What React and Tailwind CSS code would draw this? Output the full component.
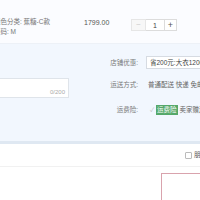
export default function App() {
  const font = { fontFamily: '"Liberation Sans", "Noto Sans CJK SC", sans-serif' };
  return (
    <div className="w-[200px] h-[200px] overflow-hidden bg-white text-[#555]" style={font}>
      {/* item row */}
      <div className="h-[44px] bg-[#fbfcff] flex border-b border-[#edf1f7]">
        <div className="w-[90px] -ml-[6px] pt-[18px] flex flex-col gap-[2px] text-[6.5px] leading-[8px] text-[#777] whitespace-nowrap">
          <div>颜色分类: 蕉糖-C款</div>
          <div>尺码: M</div>
        </div>
        <div className="w-[47px] pt-[19px] text-[7px] leading-[8px] text-[#555]">1799.00</div>
        <div className="pt-[19px] flex h-fit">
          <div className="w-[15px] h-[12px] border border-[#e6e6e6] bg-[#f7f7f7] flex items-center justify-center text-[8px] leading-none text-[#ccc]">−</div>
          <div className="w-[18px] h-[12px] border-y border-[#dcdcdc] bg-white flex items-center justify-center text-[7px] leading-none text-[#444]">1</div>
          <div className="w-[13px] h-[12px] border border-[#dcdcdc] bg-white flex items-center justify-center text-[9px] leading-none text-[#555]">+</div>
        </div>
      </div>

      {/* message + shop options */}
      <div className="h-[97px] bg-[#f2f7fe] flex">
        <div className="w-[69px] pt-[34px] shrink-0">
          <div className="h-[20px] -ml-[2px] border border-[#dfe4ea] bg-white flex items-end justify-end pr-[3px] pb-[1px] text-[6px] leading-[8px] text-[#aaa]">0/200</div>
        </div>
        <div className="ml-[31px] pt-[12px] flex flex-col text-[6.5px] leading-[8px] whitespace-nowrap">
          <div className="flex items-center h-[13px]">
            <div className="w-[38px] text-right text-[#777]">店铺优惠:</div>
            <div className="ml-[8px] h-[13px] w-[70px] border border-[#d6dbe2] bg-white flex items-center pl-[3px] text-[#444]">省200元:大衣1200减200</div>
          </div>
          <div className="flex items-center h-[10px] mt-[11px]">
            <div className="w-[38px] text-right text-[#777]">运送方式:</div>
            <div className="ml-[10px] text-[#666]">普通配送 快递 免邮</div>
          </div>
          <div className="flex items-center h-[10px] mt-[15px]">
            <div className="w-[38px] text-right text-[#777]">运费险:</div>
            <div className="ml-[12px] text-[#bbb] text-[6px]">✓</div>
            <div className="ml-[2px] h-[10px] px-[1px] bg-[#55a86a] text-white flex items-center">运费险</div>
            <div className="ml-[2px] text-[#666]">卖家赠送</div>
          </div>
        </div>
      </div>
      <div className="h-[3px] bg-[#dfe8f2]"></div>

      {/* bottom */}
      <div className="h-[23px] flex items-center pl-[185px] border-b border-[#f1f1f1]">
        <div className="flex items-center gap-[2px] text-[6.5px] text-[#555] whitespace-nowrap">
          <div className="w-[7px] h-[7px] shrink-0 border border-[#bbb] bg-white rounded-[1px]"></div>
          <span>朋友代付</span>
        </div>
      </div>
      <div className="pt-[6px] pl-[161px]">
        <div className="w-[60px] h-[40px] border border-[#d9a3ad] bg-white"></div>
      </div>
    </div>
  );
}
